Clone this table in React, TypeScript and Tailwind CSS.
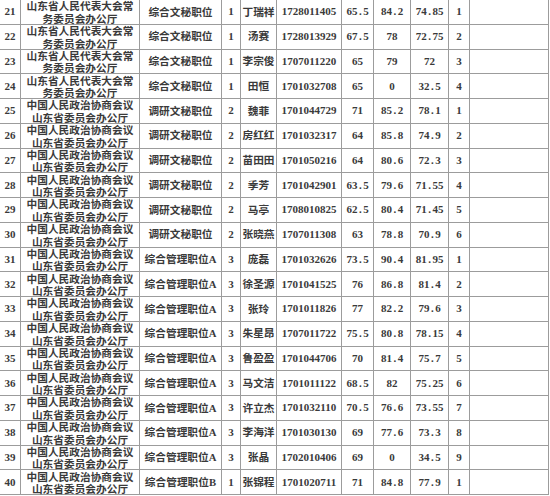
/**
 * 公务员面试成绩表（第 21–40 行）。
 * 每行固定高度 24.75px；单位名称两行排列，第二行会压到下边框上，和原表一致。
 */
const ORG_A: [string, string] = ['山东省人民代表大会常', '务委员会办公厅'];
const ORG_B: [string, string] = ['中国人民政治协商会议', '山东省委员会办公厅'];

type Row = {
  no: number;
  org: [string, string];
  post: string;
  quota: number;
  name: string;
  id: string;
  written: string;
  interview: string;
  total: string;
  rank: number;
};

const rows: Row[] = [
  { no: 21, org: ORG_A, post: '综合文秘职位', quota: 1, name: '丁瑞祥', id: '1728011405', written: '65.5', interview: '84.2', total: '74.85', rank: 1 },
  { no: 22, org: ORG_A, post: '综合文秘职位', quota: 1, name: '汤赛', id: '1728013929', written: '67.5', interview: '78', total: '72.75', rank: 2 },
  { no: 23, org: ORG_A, post: '综合文秘职位', quota: 1, name: '李宗俊', id: '1707011220', written: '65', interview: '79', total: '72', rank: 3 },
  { no: 24, org: ORG_A, post: '综合文秘职位', quota: 1, name: '田恒', id: '1701032708', written: '65', interview: '0', total: '32.5', rank: 4 },
  { no: 25, org: ORG_B, post: '调研文秘职位', quota: 2, name: '魏菲', id: '1701044729', written: '71', interview: '85.2', total: '78.1', rank: 1 },
  { no: 26, org: ORG_B, post: '调研文秘职位', quota: 2, name: '房红红', id: '1701032317', written: '64', interview: '85.8', total: '74.9', rank: 2 },
  { no: 27, org: ORG_B, post: '调研文秘职位', quota: 2, name: '苗田田', id: '1701050216', written: '64', interview: '80.6', total: '72.3', rank: 3 },
  { no: 28, org: ORG_B, post: '调研文秘职位', quota: 2, name: '季芳', id: '1701042901', written: '63.5', interview: '79.6', total: '71.55', rank: 4 },
  { no: 29, org: ORG_B, post: '调研文秘职位', quota: 2, name: '马亭', id: '1708010825', written: '62.5', interview: '80.4', total: '71.45', rank: 5 },
  { no: 30, org: ORG_B, post: '调研文秘职位', quota: 2, name: '张晓燕', id: '1707011308', written: '63', interview: '78.8', total: '70.9', rank: 6 },
  { no: 31, org: ORG_B, post: '综合管理职位A', quota: 3, name: '庞磊', id: '1701032626', written: '73.5', interview: '90.4', total: '81.95', rank: 1 },
  { no: 32, org: ORG_B, post: '综合管理职位A', quota: 3, name: '徐圣源', id: '1701041525', written: '76', interview: '86.8', total: '81.4', rank: 2 },
  { no: 33, org: ORG_B, post: '综合管理职位A', quota: 3, name: '张玲', id: '1701011826', written: '77', interview: '82.2', total: '79.6', rank: 3 },
  { no: 34, org: ORG_B, post: '综合管理职位A', quota: 3, name: '朱星昂', id: '1707011722', written: '75.5', interview: '80.8', total: '78.15', rank: 4 },
  { no: 35, org: ORG_B, post: '综合管理职位A', quota: 3, name: '鲁盈盈', id: '1701044706', written: '70', interview: '81.4', total: '75.7', rank: 5 },
  { no: 36, org: ORG_B, post: '综合管理职位A', quota: 3, name: '马文洁', id: '1701011122', written: '68.5', interview: '82', total: '75.25', rank: 6 },
  { no: 37, org: ORG_B, post: '综合管理职位A', quota: 3, name: '许立杰', id: '1701032110', written: '70.5', interview: '76.6', total: '73.55', rank: 7 },
  { no: 38, org: ORG_B, post: '综合管理职位A', quota: 3, name: '李海洋', id: '1701030130', written: '69', interview: '77.6', total: '73.3', rank: 8 },
  { no: 39, org: ORG_B, post: '综合管理职位A', quota: 3, name: '张晶', id: '1702010406', written: '69', interview: '0', total: '34.5', rank: 9 },
  { no: 40, org: ORG_B, post: '综合管理职位B', quota: 1, name: '张锦程', id: '1701020711', written: '71', interview: '84.8', total: '77.9', rank: 1 },
];

const cell = 'flex items-center justify-center whitespace-nowrap border-r border-b border-[#9c9c9c]';

// 原表的小数点占半个字宽，两边留一点空
function Num({ value }: { value: string }) {
  const [int, frac] = value.split('.');
  if (frac === undefined) return <>{value}</>;
  return (
    <>
      {int}
      <span className="px-[1.5px]">.</span>
      {frac}
    </>
  );
}

export default function App() {
  return (
    <div
      className="h-[496px] w-[550px] overflow-hidden bg-white text-[11px] font-semibold leading-none text-[#3a3a3a]"
      style={{ fontFamily: '"Liberation Serif", "Noto Sans CJK SC", serif' }}
    >
      <div className="grid grid-cols-[21px_119px_82px_19px_36px_65px_32px_37px_38px_21px_79px] auto-rows-[24.75px]">
        {rows.map((r) => (
          <div key={r.no} className="contents">
            <div className={cell}>{r.no}</div>
            <div className={`${cell} flex-col overflow-visible pt-[2px] text-[10.7px] leading-[12.4px]`}>
              <span>{r.org[0]}</span>
              <span>{r.org[1]}</span>
            </div>
            <div className={`${cell} text-[10.7px]`}>{r.post}</div>
            <div className={cell}>{r.quota}</div>
            <div className={`${cell} text-[10.7px]`}>{r.name}</div>
            <div className={cell}>{r.id}</div>
            <div className={cell}>
              <Num value={r.written} />
            </div>
            <div className={cell}>
              <Num value={r.interview} />
            </div>
            <div className={cell}>
              <Num value={r.total} />
            </div>
            <div className={cell}>{r.rank}</div>
            <div className={cell} />
          </div>
        ))}
      </div>
    </div>
  );
}
